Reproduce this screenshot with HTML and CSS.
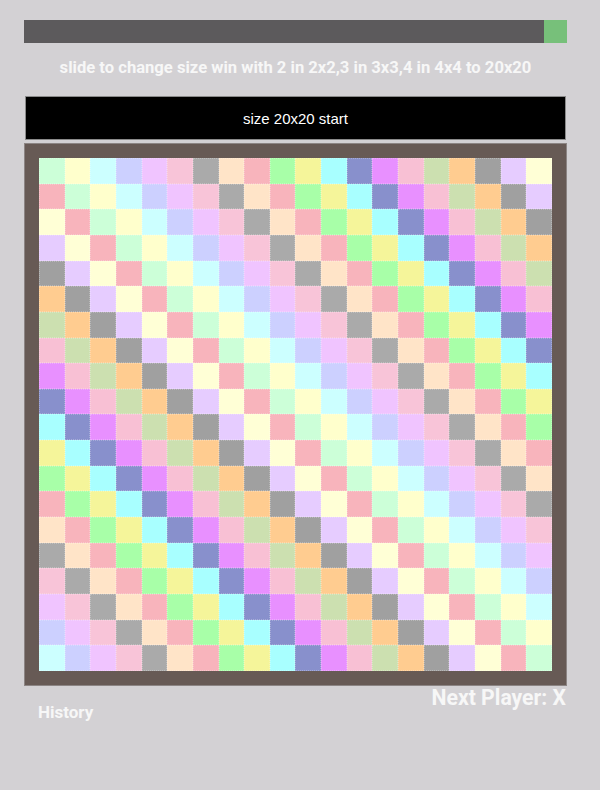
FILE: index.html
```html
<!DOCTYPE html>
<html>
<head>
<meta charset="utf-8">
<link rel="stylesheet" href="styles.css">
</head>
<body>
<div class="app">
  <div class="slider"><div class="thumb"></div></div>
  <p class="hint">slide to change size win with 2 in 2x2,3 in 3x3,4 in 4x4 to 20x20</p>
  <button class="start">size 20x20 start</button>
  <div class="board"><div class="grid" id="grid"></div></div>
  <div class="footer">
    <div class="history">History</div>
    <div class="next">Next Player: X</div>
  </div>
</div>
<script src="script.js"></script>
</body>
</html>
```
FILE: styles.css
```css
html, body { margin: 0; padding: 0; }
body {
  background: #d3d1d4;
  font-family: Roboto, "Liberation Sans", sans-serif;
  width: 600px;
  height: 790px;
  overflow: hidden;
}
.app {
  width: 543px;
  margin-left: 24px;
  padding-top: 20px;
}
.slider {
  height: 23px;
  background: #5c5a5c;
  display: flex;
  justify-content: flex-end;
}
.thumb {
  width: 23px;
  height: 23px;
  background: #77c07a;
}
.hint {
  margin: 14px 0 18px;
  line-height: 21px;
  font-size: 16.6px;
  font-weight: 700;
  color: #f7f7f7;
  text-align: center;
}
.start {
  display: block;
  width: 541px;
  height: 44px;
  margin: 0 0 0 1px;
  padding: 0;
  background: #000;
  border: 1px solid #8a8a8a;
  color: #fff;
  font-family: "Liberation Sans", Arial, sans-serif;
  font-size: 15px;
}
.board {
  margin-top: 3px;
  padding: 14px;
  background: #675a55;
  border: 1px solid #8c8584;
  box-sizing: border-box;
  width: 543px;
  height: 543px;
}
.grid {
  width: 100%;
  height: 100%;
  display: grid;
  grid-template-columns: repeat(20, 1fr);
  grid-template-rows: repeat(20, 1fr);
}
.cell { outline: 1px dotted rgba(255,255,255,0.25); outline-offset: -1px; }
.c0 { background: #ccffd8; }
.c1 { background: #ffffcc; }
.c2 { background: #ccffff; }
.c3 { background: #ccd0ff; }
.c4 { background: #f0c4ff; }
.c5 { background: #f8c4d8; }
.c6 { background: #aaaaaa; }
.c7 { background: #ffe4c8; }
.c8 { background: #f8b4bc; }
.c9 { background: #a8ffa8; }
.c10 { background: #f5f59a; }
.c11 { background: #a8ffff; }
.c12 { background: #8890cc; }
.c13 { background: #e890ff; }
.c14 { background: #f8c0d4; }
.c15 { background: #cce0b0; }
.c16 { background: #ffcc90; }
.c17 { background: #a0a0a0; }
.c18 { background: #e6ccff; }
.c19 { background: #ffffd6; }
.c20 { background: #f8b4bc; }
.footer {
  display: flex;
  justify-content: space-between;
  align-items: flex-start;
  color: #f7f7f7;
  font-weight: 700;
}
.history {
  margin: 16px 0 0 14px;
  font-size: 17px;
  line-height: 20px;
}
.next {
  margin-right: 1px;
  font-size: 21.2px;
  line-height: 24px;
}
```
FILE: script.js
```js
var grid = document.getElementById('grid');
for (var r = 0; r < 20; r++) {
  for (var c = 0; c < 20; c++) {
    var d = document.createElement('div');
    var idx = ((c - r) % 21 + 21) % 21;
    d.className = 'cell c' + idx;
    grid.appendChild(d);
  }
}
```
